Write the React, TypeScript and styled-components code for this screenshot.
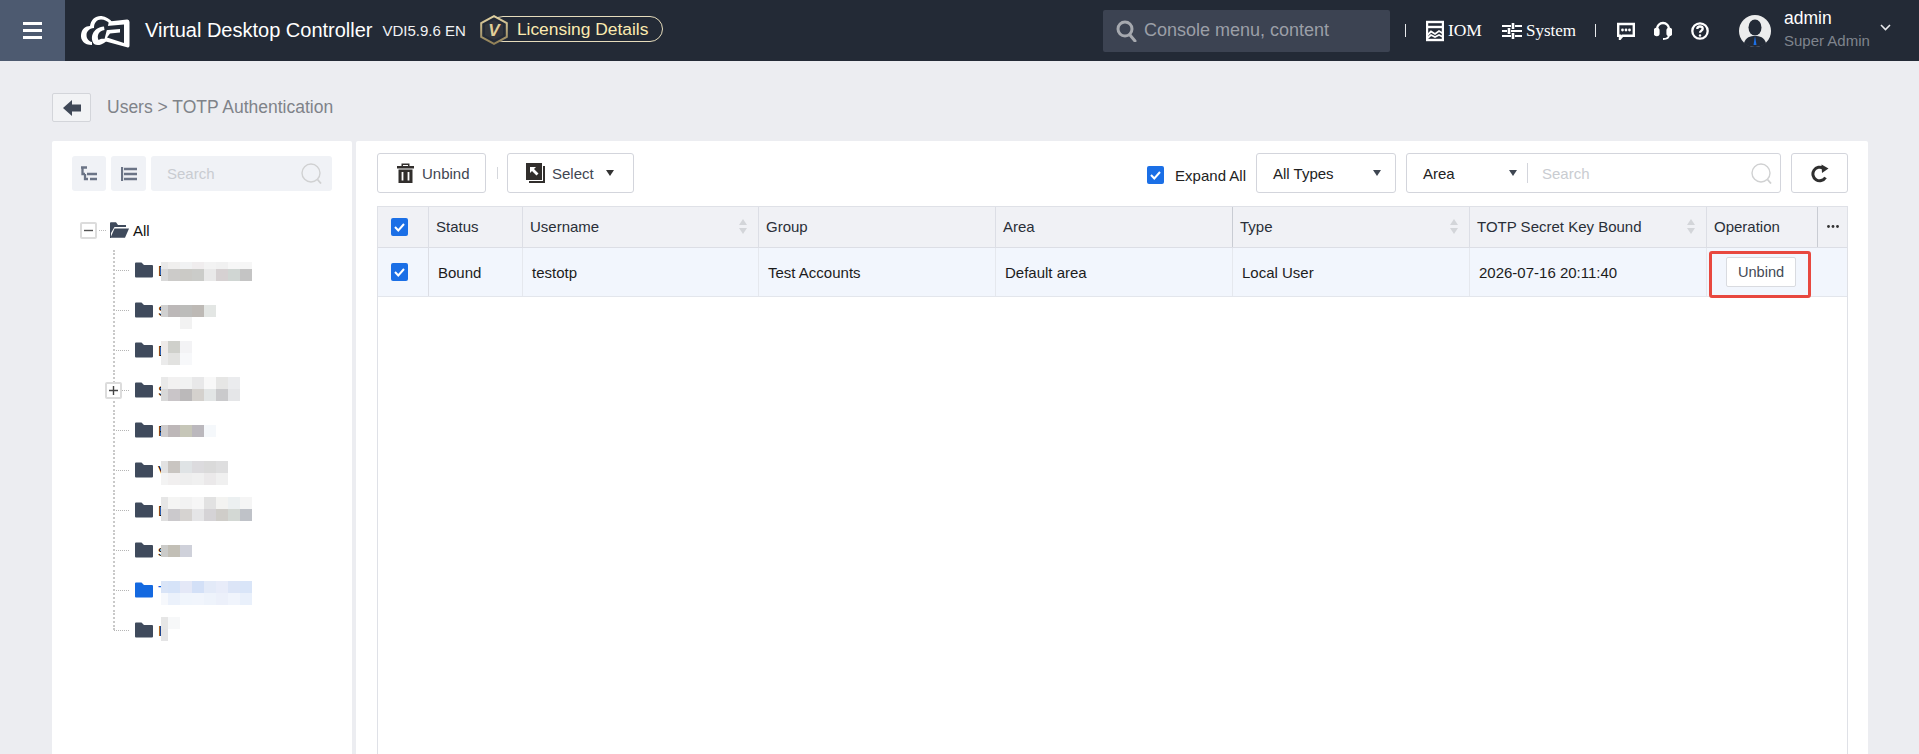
import React from "react";
import styled, { createGlobalStyle } from "styled-components";

const Global = createGlobalStyle`
  html, body { margin: 0; height: 100%; overflow: hidden; background: #ecedf1; }
  #root { height: 100vh; }
  * { box-sizing: border-box; }
  body { font-family: "Liberation Sans", Arial, sans-serif; }
`;

const Page = styled.div`
  height: 100%;
  display: flex;
  flex-direction: column;
  background: #ecedf1;
`;

/* ---------- top bar ---------- */
const TopBar = styled.header`
  height: 61px;
  flex: none;
  display: flex;
  align-items: center;
  background: #232a36;
  color: #fff;
  padding-right: 28px;
`;
const MenuTile = styled.div`
  width: 65px;
  height: 61px;
  flex: none;
  background: #4d5a70;
  display: flex;
  flex-direction: column;
  justify-content: center;
  align-items: center;
  gap: 3.5px;
`;
const MenuBar = styled.span`
  display: block;
  width: 19px;
  height: 3.5px;
  background: #fff;
`;
const LogoWrap = styled.div`
  margin-left: 15px;
  width: 50px;
  height: 34px;
  flex: none;
  svg { display: block; }
`;
const ProductName = styled.div`
  margin-left: 15px;
  font-size: 20px;
  white-space: nowrap;
`;
const Version = styled.div`
  margin-left: 10px;
  font-size: 15px;
  white-space: nowrap;
  color: #f1f2f4;
`;
const LicensePill = styled.div`
  position: relative;
  margin-left: 24px;
  height: 26px;
  margin-top: -3px;
  border: 1px solid #e6dcbc;
  border-radius: 13px;
  padding: 0 14px 0 26px;
  display: flex;
  align-items: center;
  font-size: 17.4px;
  color: #fbeab0;
  white-space: nowrap;
`;
const HexBadge = styled.span`
  position: absolute;
  left: -11px;
  top: -2px;
  width: 28px;
  height: 30px;
  svg { display: block; }
`;
const TopRight = styled.div`
  margin-left: auto;
  display: flex;
  align-items: center;
`;
const ConsoleSearch = styled.div`
  width: 287px;
  height: 42px;
  background: #3c4352;
  border-radius: 2px;
  display: flex;
  align-items: center;
  padding-left: 13px;
  gap: 7px;
  font-size: 18px;
  color: #9b9fa7;
  white-space: nowrap;
`;
const TopSep = styled.span<{ $ml: number }>`
  width: 1px;
  height: 13px;
  background: #e8e9ec;
  margin-left: ${(p) => p.$ml}px;
  margin-right: 20px;
`;
const SerifLink = styled.span<{ $size: number }>`
  font-family: "Liberation Serif", "Times New Roman", serif;
  font-size: ${(p) => p.$size}px;
  color: #fff;
  margin-left: 4px;
  white-space: nowrap;
`;
const TopIcon = styled.span<{ $ml?: number }>`
  display: flex;
  margin-left: ${(p) => p.$ml ?? 0}px;
`;
const Avatar = styled.span`
  margin-left: 30px;
  width: 32px;
  height: 32px;
  display: flex;
`;
const UserBlock = styled.div`
  margin-left: 13px;
  width: 86px;
  display: flex;
  flex-direction: column;
  gap: 4px;
  white-space: nowrap;
  margin-top: -4px;
`;
const UserName = styled.div`
  font-size: 17.5px;
  line-height: 20px;
  color: #fff;
`;
const UserRole = styled.div`
  font-size: 15px;
  line-height: 18px;
  color: #7f848d;
`;
const Chevron = styled.span`
  margin-left: 10px;
  display: flex;
  margin-top: -6px;
`;

/* ---------- crumb ---------- */
const CrumbRow = styled.div`
  height: 80px;
  flex: none;
  padding: 32px 0 0 52px;
  display: flex;
  align-items: flex-start;
`;
const BackButton = styled.div`
  width: 39px;
  height: 29px;
  border: 1px solid #d3d5da;
  border-radius: 2px;
  background: #f2f3f5;
  display: flex;
  align-items: center;
  justify-content: center;
`;
const CrumbText = styled.div`
  margin-left: 16px;
  line-height: 29px;
  font-size: 17.5px;
  color: #7f8389;
  white-space: nowrap;
`;

/* ---------- panels ---------- */
const Panels = styled.div`
  flex: 1;
  min-height: 0;
  display: flex;
  gap: 4px;
  padding: 0 51px 0 52px;
`;
const SidePanel = styled.aside`
  width: 300px;
  flex: none;
  background: #fff;
  padding: 15px 20px 0;
  border-radius: 2px 2px 0 0;
`;
const SideTools = styled.div`
  display: flex;
  gap: 5px;
  height: 35px;
`;
const SideToolButton = styled.div<{ $w: number }>`
  width: ${(p) => p.$w}px;
  height: 35px;
  flex: none;
  background: #f0f2f6;
  border-radius: 3px;
  display: flex;
  align-items: center;
  justify-content: center;
`;
const SideSearch = styled.div`
  flex: 1;
  background: #f0f2f6;
  border-radius: 3px;
  display: flex;
  align-items: center;
  justify-content: space-between;
  padding: 0 10px 0 16px;
  font-size: 15px;
  color: #c9ccd1;
`;
const Tree = styled.div`
  margin-top: 19px;
`;
const RootRow = styled.div`
  height: 40px;
  display: flex;
  align-items: center;
  padding-left: 8px;
  font-size: 15px;
  color: #111;
`;
const Toggle = styled.span`
  width: 17px;
  height: 17px;
  flex: none;
  border: 2px solid #dcdcdc;
  background: #fff;
  border-radius: 2px;
  display: flex;
  align-items: center;
  justify-content: center;
  color: #444;
`;
const RootDots = styled.span`
  width: 7px;
  margin: 0 4px 0 2px;
  border-top: 1px dotted #bbb;
`;
const RootLabel = styled.span`
  margin-left: 4px;
`;
const ChildRow = styled.div<{ $last?: boolean }>`
  position: relative;
  height: 40px;
  margin-left: 41px;
  display: flex;
  align-items: center;
  font-size: 15px;
  &::before {
    content: "";
    position: absolute;
    left: 0;
    top: 0;
    height: ${(p) => (p.$last ? "20px" : "37px")};
    border-left: 2px dotted #c9c9c9;
  }
`;
const Dash = styled.span`
  width: 15px;
  margin-left: 1px;
  flex: none;
  border-top: 1px dotted #b5b5b5;
`;
const ChildFolder = styled.span`
  margin-left: 6px;
  display: flex;
  flex: none;
`;
const ChildLetter = styled.span<{ $blue?: boolean }>`
  margin-left: 5px;
  color: ${(p) => (p.$blue ? "#1469e0" : "#111")};
`;
const PlusToggle = styled(Toggle)`
  position: absolute;
  left: -8px;
  top: 12px;
`;
const Mosaic = styled.div<{ $top: number; $firstRow: number; $rows: number }>`
  position: absolute;
  left: 48px;
  top: ${(p) => p.$top}px;
  display: grid;
  grid-template-columns: 7px repeat(8, 12px);
  grid-template-rows: ${(p) => p.$firstRow}px ${(p) => (p.$rows > 1 ? "12px" : "")};
`;
const MosaicCell = styled.span<{ $c: string }>`
  background: ${(p) => p.$c || "transparent"};
`;

const MainPanel = styled.main`
  flex: 1;
  min-width: 0;
  background: #fff;
  display: flex;
  flex-direction: column;
  padding: 12px 20px 0 21px;
  border-radius: 2px 2px 0 0;
`;
const Toolbar = styled.div`
  height: 40px;
  flex: none;
  display: flex;
  align-items: stretch;
  font-size: 15px;
  color: #3f4652;
`;
const ToolButton = styled.div<{ $w: number; $pl: number }>`
  width: ${(p) => p.$w}px;
  border: 1px solid #d3d5dc;
  border-radius: 3px;
  background: #fff;
  display: flex;
  align-items: center;
  padding-left: ${(p) => p.$pl}px;
  white-space: nowrap;
`;
const ToolLabel = styled.span<{ $ml: number }>`
  margin-left: ${(p) => p.$ml}px;
`;
const Caret = styled.span<{ $ml?: number; $c?: string }>`
  width: 0;
  height: 0;
  flex: none;
  margin-left: ${(p) => p.$ml ?? 0}px;
  border-left: 4.5px solid transparent;
  border-right: 4.5px solid transparent;
  border-top: 6px solid ${(p) => p.$c ?? "#333"};
`;
const ToolSep = styled.span`
  width: 1px;
  height: 12px;
  background: #d5d7dc;
  align-self: center;
  margin: 0 9px 0 11px;
`;
const ExpandAll = styled.label`
  margin-left: auto;
  padding-top: 4px;
  display: flex;
  align-items: center;
  gap: 11px;
  color: #222;
  font-size: 15px;
  white-space: nowrap;
`;
const TypeSelect = styled.div`
  margin-left: 10px;
  width: 140px;
  border: 1px solid #d3d5dc;
  border-radius: 3px;
  display: flex;
  align-items: center;
  justify-content: space-between;
  padding: 0 14px 0 16px;
  color: #222;
`;
const AreaSearch = styled.div`
  margin-left: 10px;
  width: 375px;
  border: 1px solid #d3d5dc;
  border-radius: 3px;
  display: flex;
  align-items: center;
  color: #222;
`;
const AreaPick = styled.div`
  width: 121px;
  height: 20px;
  flex: none;
  border-right: 1px solid #d3d5dc;
  display: flex;
  align-items: center;
  justify-content: space-between;
  padding: 0 10px 0 16px;
`;
const AreaInput = styled.div`
  flex: 1;
  display: flex;
  align-items: center;
  justify-content: space-between;
  padding: 0 8px 0 14px;
  color: #c9ccd1;
`;
const RefreshButton = styled.div`
  margin-left: 10px;
  width: 57px;
  border: 1px solid #d3d5dc;
  border-radius: 3px;
  display: flex;
  align-items: center;
  justify-content: center;
`;
const TableFrame = styled.div`
  position: relative;
  margin-top: 13px;
  flex: 1;
  min-height: 0;
  border-left: 1px solid #dfe1e7;
  border-right: 1px solid #dfe1e7;
  font-size: 15px;
`;
const columns = "51px 94px 236px 237px 237px 237px 237px 111px 1fr";
const HeadRow = styled.div`
  display: grid;
  grid-template-columns: ${columns};
  height: 42px;
  background: #f0f1f5;
  border-top: 1px solid #dfe1e7;
  border-bottom: 1px solid #dcdee5;
  color: #2a2f38;
`;
const HeadCell = styled.div<{ $strong?: boolean }>`
  display: flex;
  align-items: center;
  justify-content: space-between;
  padding: 0 11px 1px 7px;
  border-right: 1px solid ${(p) => (p.$strong ? "#c9ccd3" : "#dcdee5")};
  white-space: nowrap;
  min-width: 0;
  &:last-child { border-right: 0; justify-content: center; padding: 0 0 1px; }
`;
const BodyRow = styled.div`
  display: grid;
  grid-template-columns: ${columns};
  height: 49px;
  background: #f2f6fd;
  border-bottom: 1px solid #e3e6ec;
  color: #1c1c1c;
`;
const BodyCell = styled.div<{ $plain?: boolean }>`
  display: flex;
  align-items: center;
  padding: 0 9px;
  border-right: ${(p) => (p.$plain ? "0" : "1px solid #e5e8ee")};
  white-space: nowrap;
`;
const CheckCell = styled.div`
  display: flex;
  align-items: center;
  justify-content: center;
  padding-right: 7px;
  border-right: 1px solid #dcdee5;
`;
const CheckBox = styled.span`
  width: 17px;
  height: 18px;
  flex: none;
  border-radius: 2px;
  background: #1b6fe6;
  display: flex;
  align-items: center;
  justify-content: center;
`;
const SortArrows = styled.span`
  display: flex;
  flex-direction: column;
  gap: 3px;
  flex: none;
`;
const SortUp = styled.span`
  width: 0;
  height: 0;
  border-left: 4.5px solid transparent;
  border-right: 4.5px solid transparent;
  border-bottom: 6px solid #d3d5d9;
`;
const SortDown = styled(SortUp)`
  border-bottom: 0;
  border-top: 6px solid #d3d5d9;
`;
const OpButton = styled.div`
  width: 70px;
  height: 30px;
  margin-left: 10px;
  background: #fff;
  border: 1px solid #d9dbe0;
  border-radius: 2px;
  font-size: 14.6px;
  color: #444a55;
  display: flex;
  align-items: center;
  justify-content: center;
`;
const RedMark = styled.div`
  position: absolute;
  left: 1331px;
  top: 45px;
  width: 102px;
  height: 47px;
  border: 3px solid #e8483f;
  border-radius: 3px;
  pointer-events: none;
`;

/* ---------- icons ---------- */
const Logo = () => (
  <svg width="50" height="34" viewBox="0 0 50 34">
    <path d="M29 7.500L47 5.500Q49.500 5.300 49.500 8V31.500Q49.500 34 47 33.200L24 27Z" fill="#fff" />
    <path d="M21 12.500L44 10.500V29L27 23.500L30 19.500L40 18.500V15L22 16.500Z" fill="#232a36" />
    <path d="M12 31C4 31 0.500 26 1 21C1.500 15 5.500 12 10 12C11 5 16 1.500 21.500 2C26 2.500 30 5 32.500 8.500L30 10C27.500 7 24.500 5.500 21 5.500C17 5.500 14 8.500 14 14C9 14.500 6.500 17.500 6.500 21C6.500 25 9 27.500 12 28Z" fill="#fff" />
    <path d="M14 30C9.500 24 12.500 13.500 24 12.500L24.500 16C19 17 16.500 21 18.500 26C21 24.500 24 24 28 26L24 29C21 31 17 32 14 30Z" fill="#fff" />
  </svg>
);
const Hex = () => (
  <svg width="28" height="30" viewBox="0 0 28 30">
    <defs>
      <linearGradient id="hexEdge" x1="0" y1="0" x2="0" y2="1">
        <stop offset="0" stopColor="#e2d2a2" />
        <stop offset="1" stopColor="#8f7f56" />
      </linearGradient>
    </defs>
    <path d="M14 1.200L26.800 8V22L14 28.800L1.200 22V8Z" fill="#232a36" stroke="url(#hexEdge)" strokeWidth="2" />
    <path d="M14 5L23 9.800V20.200L14 25L5 20.200V9.800Z" fill="#30343c" />
    <text x="14" y="21" textAnchor="middle" fontFamily="Liberation Sans" fontWeight="700" fontStyle="italic" fontSize="17" fill="#e2cf98">V</text>
  </svg>
);
const BigSearch = () => (
  <svg width="21" height="22" viewBox="0 0 21 22" fill="none" stroke="#a6a9af" strokeWidth="3">
    <circle cx="9" cy="9" r="7" />
    <path d="M14 15L19 21" strokeLinecap="round" />
  </svg>
);
const IomIcon = () => (
  <svg width="18" height="22" viewBox="0 0 18 22" fill="none" stroke="#fff">
    <rect x="1" y="2" width="16" height="18" strokeWidth="2.400" />
    <path d="M1 7H17" strokeWidth="2.400" />
    <path d="M1 15.500L5 11.500L9 14L13 11L17 13.500M1 18.500L5 15L9 17L13 15L17 17" strokeWidth="1.800" />
  </svg>
);
const SystemIcon = () => (
  <svg width="20" height="18" viewBox="0 0 20 18" fill="none" stroke="#fff" strokeWidth="2.200">
    <path d="M0 4H9M13 4H20M0 9H5M9 9H20M0 14H9M13 14H20" />
    <path d="M11 1V7M7 6V12M11 11V17" strokeWidth="2.600" />
  </svg>
);
const ChatIcon = () => (
  <svg width="18" height="18" viewBox="0 0 18 18">
    <path d="M1.200 2H16.800V13.800H5.500L3 16.800V13.800H1.200Z" fill="#232a36" stroke="#fff" strokeWidth="2.400" />
    <circle cx="5.500" cy="8" r="1.400" fill="#fff" />
    <circle cx="9" cy="8" r="1.400" fill="#fff" />
    <circle cx="12.500" cy="8" r="1.400" fill="#fff" />
  </svg>
);
const HeadsetIcon = () => (
  <svg width="18" height="20" viewBox="0 0 18 20" fill="none" stroke="#fff" strokeWidth="2.400">
    <path d="M3 10V8A6 6 0 0 1 15 8V10" />
    <rect x="1" y="8" width="3.400" height="6" rx="1.500" fill="#fff" />
    <rect x="13.600" y="8" width="3.400" height="6" rx="1.500" fill="#fff" />
    <path d="M15 14C15 17 13 18 9 18" strokeWidth="1.800" />
  </svg>
);
const HelpIcon = () => (
  <svg width="18" height="18" viewBox="0 0 18 18" fill="none" stroke="#fff" strokeWidth="2.300">
    <circle cx="9" cy="9" r="7.700" />
    <path d="M6.300 7C6.300 5.400 7.500 4.500 9 4.500C10.600 4.500 11.700 5.500 11.700 6.800C11.700 8.600 9 8.600 9 10.800" />
    <circle cx="9" cy="13.500" r="1.200" fill="#fff" stroke="none" />
  </svg>
);
const AvatarIcon = () => (
  <svg width="32" height="32" viewBox="0 0 32 32">
    <circle cx="16" cy="16" r="16" fill="#eceded" />
    <ellipse cx="16" cy="12.500" rx="6.500" ry="8" fill="#232a36" />
    <path d="M5 28C7 22 11 21 16 21C21 21 25 22 27 28C24 31 20 32 16 32C12 32 8 31 5 28Z" fill="#232a36" />
    <path d="M16 21L14.500 30H17.500Z" fill="#1b6fe6" />
  </svg>
);
const ChevronIcon = () => (
  <svg width="11" height="7" viewBox="0 0 11 7" fill="none" stroke="#e8e9ec" strokeWidth="1.600">
    <path d="M1 1L5.500 5.500L10 1" />
  </svg>
);
const BackArrow = () => (
  <svg width="18" height="16" viewBox="0 0 18 16" fill="#3f4857">
    <path d="M0 8L9 0V4.500H18V11.500H9V16Z" />
  </svg>
);
const ThinSearch = ({ size = 21 }: { size?: number }) => (
  <svg width={size} height={size} viewBox="0 0 21 21" fill="none" stroke="#d0d1d2" strokeWidth="1.400">
    <circle cx="10" cy="10" r="9" />
    <path d="M16.500 16.500L20 20.500" strokeWidth="1.800" />
  </svg>
);
const TreeToolA = () => (
  <svg width="16" height="15" viewBox="0 0 16 15" fill="none" stroke="#6b7486" strokeWidth="2.300">
    <path d="M0 1.500H6M1.500 1.500V8H4M6 8H16M9 13H16M4 8V13H7" />
  </svg>
);
const TreeToolB = () => (
  <svg width="16" height="14" viewBox="0 0 16 14" fill="none" stroke="#6b7486" strokeWidth="2.300">
    <path d="M1 0V14M3 2H16M3 7H16M3 12H16" />
  </svg>
);
const Folder = ({ color = "#3f4a5c" }: { color?: string }) => (
  <svg width="18" height="16" viewBox="0 0 18 16" fill={color}>
    <path d="M0 1.500Q0 .5 1 .5H6.500L9 3H17Q18 3 18 4V14.500Q18 15.500 17 15.500H1Q0 15.500 0 14.500Z" />
  </svg>
);
const OpenFolder = () => (
  <svg width="19" height="16" viewBox="0 0 19 16" fill="#3f4a5c">
    <path d="M0 1Q0 .3 1 .3H6L8 3H16V5H4.500L1 11V16H0Z" />
    <path d="M4.500 6.500H19L15 15.700H0.500Z" />
  </svg>
);
const Minus = () => (
  <svg width="9" height="9" viewBox="0 0 9 9" stroke="#555" strokeWidth="1.400"><path d="M0 4.500H9" /></svg>
);
const Plus = () => (
  <svg width="9" height="9" viewBox="0 0 9 9" stroke="#444" strokeWidth="1.400"><path d="M0 4.500H9M4.500 0V9" /></svg>
);
const Trash = () => (
  <svg width="17" height="20" viewBox="0 0 17 20">
    <path d="M0 3H4.500V.5H12.500V3H17V5.500H0ZM6 2V3H11V2Z" fill="#312e2c" fillRule="evenodd" />
    <path d="M1.500 6.500H15.500V20H1.500Z" fill="#312e2c" />
    <path d="M5.500 9V17.500M11.500 9V17.500" stroke="#fff" strokeWidth="1.800" />
  </svg>
);
const SelectIcon = () => (
  <svg width="19" height="20" viewBox="0 0 19 20">
    <path d="M3 3V20H19V3H17V18H3Z" fill="#312e2c" />
    <rect x="0" y="0" width="16" height="17" fill="#312e2c" />
    <path d="M4 4H10L8 6L12.500 10.500L10.500 12.500L6 8L4 10Z" fill="#fff" />
  </svg>
);
const Refresh = () => (
  <svg width="18" height="19" viewBox="0 0 18 19" fill="none">
    <path d="M14.500 13.500A6.800 6.800 0 1 1 12.500 4.300" stroke="#2f2f2f" strokeWidth="3" />
    <path d="M10.500 0.500L17.500 4.500L11 9Z" fill="#2f2f2f" />
  </svg>
);
const Tick = () => (
  <svg width="11" height="9" viewBox="0 0 11 9" fill="none" stroke="#fff" strokeWidth="2">
    <path d="M1 4L4.300 7.500L10 1" />
  </svg>
);
const Dots = () => (
  <svg width="12" height="3" viewBox="0 0 12 3" fill="#333">
    <circle cx="1.500" cy="1.500" r="1.400" />
    <circle cx="6" cy="1.500" r="1.400" />
    <circle cx="10.500" cy="1.500" r="1.400" />
  </svg>
);
const Sort = () => (
  <SortArrows>
    <SortUp />
    <SortDown />
  </SortArrows>
);

/* ---------- data ---------- */
type TreeItem = {
  letter: string;
  top: number;
  firstRow?: number;
  cells: string[][];
  blue?: boolean;
  expandable?: boolean;
  last?: boolean;
};
const treeItems: TreeItem[] = [
  { letter: "D", top: 12, firstRow: 7, cells: [
    ["#e9e9e9", "#f0efee", "#f1f2f3", "#f0edee", "#f3f3f3", "#f1f1f1", "#f7f7f7", "#f6f6f6"],
    ["#d8d8d8", "#cccbc9", "#cbcac6", "#cbccc9", "#e9e9e9", "#d6d1d2", "#d0d6d3", "#c4c4c4"],
  ] },
  { letter: "S", top: 15, cells: [
    ["#d0d0d0", "#bcb8b8", "#bcbcba", "#bdb9b5", "#e3e6e4"],
    ["", "", "#f2f2f2"],
  ] },
  { letter: "D", top: 11, cells: [
    ["#eeeae8", "#cfd0cb", "#f3f3f5"],
    ["#ebebeb", "#e2e2e0", "#f7f8fa"],
  ] },
  { letter: "S", top: 7, expandable: true, cells: [
    ["#e9e9e9", "#f2f1f1", "#f1f2f2", "#e8e8e9", "#f8f8f8", "#e6e6e5", "#ebecee"],
    ["#d8d8d8", "#c9c5c8", "#bbb9ba", "#d4d1cd", "#e2e5e5", "#cacacc", "#e5e6e8"],
  ] },
  { letter: "R", top: 15, cells: [["#cfcccc", "#bdb7b8", "#c6c6b8", "#bbb8bd", "#f5f8fb"]] },
  { letter: "V", top: 11, cells: [
    ["#e2e2e2", "#c9c5c1", "#dfe3e5", "#dcdbde", "#dadada", "#dededf"],
    ["#f3f3f3", "#f1efef", "#eeeeee", "#f0f0f0", "#ebe9ea", "#f0f0f0"],
  ] },
  { letter: "D", top: 7, cells: [
    ["#e6e6e6", "#f5f5f4", "#f2f2f2", "#f6f6f6", "#e2e2e2", "#f3f3f1", "#ecf0f1", "#f5f5f5"],
    ["#dedede", "#cbc9cc", "#d6d3d1", "#e5e5e7", "#d5d3d6", "#cfcdc9", "#d3d8d4", "#bfc2c8"],
  ] },
  { letter: "s", top: 15, cells: [["#cbcbc9", "#c2bfb6", "#cfd1da"]] },
  { letter: "T", top: 11, blue: true, cells: [
    ["#d9e4f7", "#d6e3f8", "#e4e8f7", "#d3e0f7", "#e3eaf8", "#e8ecf9", "#dce5f7", "#d9e5f8"],
    ["#f6f8fc", "#ebf1fb", "#f0f5fc", "#f1f5fc", "#eef3fb", "#ecf0fa", "#f0f4fc", "#e9f0fb"],
  ] },
  { letter: "I", top: 7, last: true, cells: [
    ["#e6e6e6", "#f7f8f9"],
    ["#e4e4e5"],
  ] },
];

const heads = [
  { label: "Status" },
  { label: "Username", sort: true },
  { label: "Group" },
  { label: "Area" },
  { label: "Type", sort: true },
  { label: "TOTP Secret Key Bound", sort: true },
];
const cellsData = ["Bound", "testotp", "Test Accounts", "Default area", "Local User", "2026-07-16 20:11:40"];

function TreeChild({ item }: { item: TreeItem }) {
  return (
    <ChildRow $last={item.last}>
      <Dash />
      <ChildFolder>
        <Folder color={item.blue ? "#1469e0" : undefined} />
      </ChildFolder>
      <ChildLetter $blue={item.blue}>{item.letter}</ChildLetter>
      {item.expandable && (
        <PlusToggle>
          <Plus />
        </PlusToggle>
      )}
      <Mosaic $top={item.top} $firstRow={item.firstRow ?? 12} $rows={item.cells.length}>
        {item.cells.map((row, r) =>
          Array.from({ length: 9 }).map((_, c) => <MosaicCell key={`${r}-${c}`} $c={row[c] ?? ""} />)
        )}
      </Mosaic>
    </ChildRow>
  );
}

export default function App() {
  return (
    <Page>
      <Global />
      <TopBar>
        <MenuTile>
          <MenuBar />
          <MenuBar />
          <MenuBar />
        </MenuTile>
        <LogoWrap>
          <Logo />
        </LogoWrap>
        <ProductName>Virtual Desktop Controller</ProductName>
        <Version>VDI5.9.6 EN</Version>
        <LicensePill>
          <HexBadge>
            <Hex />
          </HexBadge>
          Licensing Details
        </LicensePill>
        <TopRight>
          <ConsoleSearch>
            <BigSearch />
            Console menu, content
          </ConsoleSearch>
          <TopSep $ml={15} />
          <TopIcon>
            <IomIcon />
          </TopIcon>
          <SerifLink $size={17.5}>IOM</SerifLink>
          <TopIcon $ml={20}>
            <SystemIcon />
          </TopIcon>
          <SerifLink $size={17}>System</SerifLink>
          <TopSep $ml={19} />
          <TopIcon $ml={1}>
            <ChatIcon />
          </TopIcon>
          <TopIcon $ml={19}>
            <HeadsetIcon />
          </TopIcon>
          <TopIcon $ml={19}>
            <HelpIcon />
          </TopIcon>
          <Avatar>
            <AvatarIcon />
          </Avatar>
          <UserBlock>
            <UserName>admin</UserName>
            <UserRole>Super Admin</UserRole>
          </UserBlock>
          <Chevron>
            <ChevronIcon />
          </Chevron>
        </TopRight>
      </TopBar>

      <CrumbRow>
        <BackButton>
          <BackArrow />
        </BackButton>
        <CrumbText>Users &gt; TOTP Authentication</CrumbText>
      </CrumbRow>

      <Panels>
        <SidePanel>
          <SideTools>
            <SideToolButton $w={34}>
              <TreeToolA />
            </SideToolButton>
            <SideToolButton $w={35}>
              <TreeToolB />
            </SideToolButton>
            <SideSearch>
              Search
              <ThinSearch />
            </SideSearch>
          </SideTools>
          <Tree>
            <RootRow>
              <Toggle>
                <Minus />
              </Toggle>
              <RootDots />
              <OpenFolder />
              <RootLabel>All</RootLabel>
            </RootRow>
            {treeItems.map((item, i) => (
              <TreeChild key={i} item={item} />
            ))}
          </Tree>
        </SidePanel>

        <MainPanel>
          <Toolbar>
            <ToolButton $w={109} $pl={19}>
              <Trash />
              <ToolLabel $ml={8}>Unbind</ToolLabel>
            </ToolButton>
            <ToolSep />
            <ToolButton $w={127} $pl={18}>
              <SelectIcon />
              <ToolLabel $ml={7}>Select</ToolLabel>
              <Caret $ml={12} />
            </ToolButton>
            <ExpandAll>
              <CheckBox>
                <Tick />
              </CheckBox>
              Expand All
            </ExpandAll>
            <TypeSelect>
              All Types
              <Caret $c="#3f4652" />
            </TypeSelect>
            <AreaSearch>
              <AreaPick>
                Area
                <Caret $c="#3f4652" />
              </AreaPick>
              <AreaInput>
                Search
                <ThinSearch />
              </AreaInput>
            </AreaSearch>
            <RefreshButton>
              <Refresh />
            </RefreshButton>
          </Toolbar>

          <TableFrame>
            <HeadRow>
              <CheckCell>
                <CheckBox>
                  <Tick />
                </CheckBox>
              </CheckCell>
              {heads.map((h, i) => (
                <HeadCell key={h.label} $strong={i === 3}>
                  {h.label}
                  {h.sort && <Sort />}
                </HeadCell>
              ))}
              <HeadCell $strong>Operation</HeadCell>
              <HeadCell>
                <Dots />
              </HeadCell>
            </HeadRow>
            <BodyRow>
              <CheckCell>
                <CheckBox>
                  <Tick />
                </CheckBox>
              </CheckCell>
              {cellsData.map((c) => (
                <BodyCell key={c}>{c}</BodyCell>
              ))}
              <BodyCell $plain>
                <OpButton>Unbind</OpButton>
              </BodyCell>
              <BodyCell $plain />
            </BodyRow>
            <RedMark />
          </TableFrame>
        </MainPanel>
      </Panels>
    </Page>
  );
}
